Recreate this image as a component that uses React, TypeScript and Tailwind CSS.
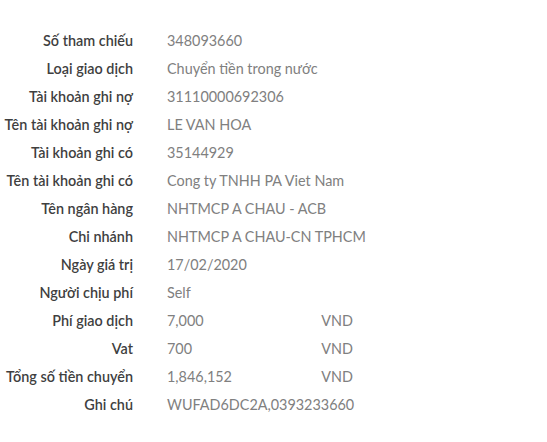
const ROWS: { label: string; value: string; unit?: string }[] = [
  { label: "Số tham chiếu", value: "348093660" },
  { label: "Loại giao dịch", value: "Chuyển tiền trong nước" },
  { label: "Tài khoản ghi nợ", value: "31110000692306" },
  { label: "Tên tài khoản ghi nợ", value: "LE VAN HOA" },
  { label: "Tài khoản ghi có", value: "35144929" },
  { label: "Tên tài khoản ghi có", value: "Cong ty TNHH PA Viet Nam" },
  { label: "Tên ngân hàng", value: "NHTMCP A CHAU - ACB" },
  { label: "Chi nhánh", value: "NHTMCP A CHAU-CN TPHCM" },
  { label: "Ngày giá trị", value: "17/02/2020" },
  { label: "Người chịu phí", value: "Self" },
  { label: "Phí giao dịch", value: "7,000", unit: "VND" },
  { label: "Vat", value: "700", unit: "VND" },
  { label: "Tổng số tiền chuyển", value: "1,846,152", unit: "VND" },
  { label: "Ghi chú", value: "WUFAD6DC2A,0393233660" },
];

export default function App() {
  return (
    <div className="w-[547px] h-[442px] bg-white pt-[27px] font-['Lato',sans-serif] text-[14.4px]">
      {ROWS.map((r) => (
        <div key={r.label} className="flex h-[28px] items-center">
          <div className="w-[133px] text-right font-semibold text-[#3f3f3f]">
            {r.label}
          </div>
          <div className="ml-[34px] flex w-[186px] justify-between text-[#808080]">
            <span className="whitespace-nowrap">{r.value}</span>
            {r.unit && <span>{r.unit}</span>}
          </div>
        </div>
      ))}
    </div>
  );
}
